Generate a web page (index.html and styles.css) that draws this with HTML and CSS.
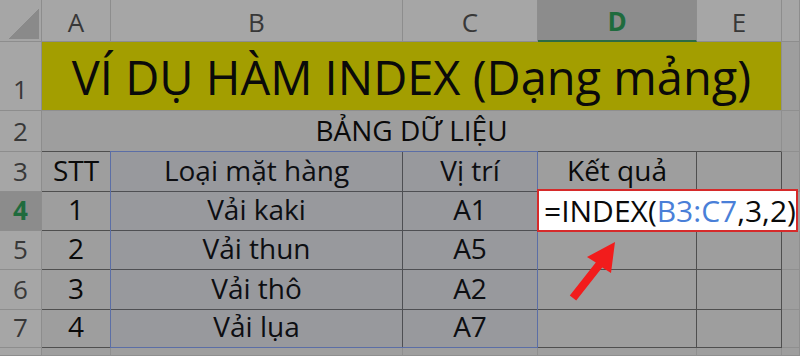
FILE: index.html
```html
<!DOCTYPE html>
<html lang="vi">
<head>
  <meta charset="UTF-8">
  <title>Hàm INDEX - Dạng mảng</title>
  <link rel="stylesheet" href="styles.css">
</head>
<body>
  <div class="sheet">
    <!-- column headers -->
    <div class="corner"><div class="corner-mark"></div></div>
    <div class="col-head">A</div>
    <div class="col-head">B</div>
    <div class="col-head">C</div>
    <div class="col-head active">D</div>
    <div class="col-head">E</div>
    <div class="col-head"></div>

    <!-- row 1 -->
    <div class="row-head row-1">1</div>
    <div class="title">VÍ DỤ HÀM INDEX (Dạng mảng)</div>
    <div class="cell"></div>

    <!-- row 2 -->
    <div class="row-head">2</div>
    <div class="subtitle">BẢNG DỮ LIỆU</div>
    <div class="cell"></div>

    <!-- row 3 -->
    <div class="row-head">3</div>
    <div class="cell tbl">STT</div>
    <div class="cell tbl">Loại mặt hàng</div>
    <div class="cell tbl">Vị trí</div>
    <div class="cell tbl">Kết quả</div>
    <div class="cell tbl"></div>
    <div class="cell"></div>

    <!-- row 4: D4 is being edited -->
    <div class="row-head active">4</div>
    <div class="cell tbl">1</div>
    <div class="cell tbl">Vải kaki</div>
    <div class="cell tbl">A1</div>
    <div class="editor">=INDEX(<span class="ref">B3:C7</span>,3,2)</div>

    <!-- row 5 -->
    <div class="row-head">5</div>
    <div class="cell tbl">2</div>
    <div class="cell tbl">Vải thun</div>
    <div class="cell tbl">A5</div>
    <div class="cell tbl"></div>
    <div class="cell tbl"></div>
    <div class="cell"></div>

    <!-- row 6 -->
    <div class="row-head">6</div>
    <div class="cell tbl">3</div>
    <div class="cell tbl">Vải thô</div>
    <div class="cell tbl">A2</div>
    <div class="cell tbl"></div>
    <div class="cell tbl"></div>
    <div class="cell"></div>

    <!-- row 7 -->
    <div class="row-head">7</div>
    <div class="cell tbl">4</div>
    <div class="cell tbl">Vải lụa</div>
    <div class="cell tbl">A7</div>
    <div class="cell tbl"></div>
    <div class="cell tbl"></div>
    <div class="cell"></div>

    <!-- row 8 (cut off) -->
    <div class="row-head"></div>
    <div class="cell"></div>
    <div class="cell"></div>
    <div class="cell"></div>
    <div class="cell"></div>
    <div class="cell"></div>
    <div class="cell"></div>

    <!-- referenced range B3:C7, drawn over the cells -->
    <div class="range"></div>

    <svg class="arrow" width="800" height="356" viewBox="0 0 800 356">
      <polygon points="615,242 611,273 602.2,267.4 576.2,300.4 569.8,295.6 595.8,262.6 587,257" fill="#f21c1c"/>
    </svg>
  </div>
</body>
</html>
```

FILE: styles.css
```css
body {
  margin: 0;
  background-color: #9e9e9e;
  font-family: "Open Sans", "Noto Sans", sans-serif;
}
.sheet {
  position: relative;
  display: grid;
  grid-template-columns: 42px 69px 292px 135px 159px 85px 18px;
  grid-template-rows: 42px 69px 41px 40px 39px 39px 40px 38px 8px;
  width: 800px;
  height: 356px;
  overflow: hidden;
  background-color: #9e9e9e;
  color: #0a0a0a;
}
.sheet > div {
  box-sizing: border-box;
}
.corner {
  background-color: #a6a6a6;
  border-right: 1px solid #8d8d8d;
  border-bottom: 1px solid #8d8d8d;
  padding: 8px 2px 2px 8px;
}
.corner-mark {
  width: 31px;
  height: 31px;
  background: linear-gradient(to bottom right, transparent 50%, #8a8a8a 50%);
}
.col-head,
.row-head {
  display: flex;
  align-items: flex-end;
  justify-content: center;
  background-color: #a6a6a6;
  border-right: 1px solid #8d8d8d;
  border-bottom: 1px solid #8d8d8d;
  color: #383838;
  font-size: 26px;
  line-height: 1;
}
.col-head {
  padding-bottom: 6px;
}
.row-head {
  padding-bottom: 7px;
}
.row-head.row-1 {
  padding-bottom: 8px;
}
.col-head.active,
.row-head.active {
  background-color: #8c8c8c;
  color: #1f6b3d;
  font-weight: 700;
}
.col-head.active {
  border-bottom: 2px solid #2d6a44;
}
.cell {
  display: flex;
  align-items: flex-end;
  justify-content: center;
  border-right: 1px solid #8f8f8f;
  border-bottom: 1px solid #8f8f8f;
  font-size: 28px;
  line-height: 1;
  padding-bottom: 7px;
  white-space: nowrap;
}
.cell.tbl {
  border-right-color: #4f4f4f;
  border-bottom-color: #4f4f4f;
}
.title {
  grid-column: span 5;
  display: flex;
  align-items: flex-end;
  justify-content: center;
  background-color: #a39e00;
  border-right: 1px solid #8f8f8f;
  border-bottom: 1px solid #8f8f8f;
  font-size: 47px;
  line-height: 1;
  padding-bottom: 9px;
  white-space: nowrap;
}
.subtitle {
  grid-column: span 5;
  display: flex;
  align-items: flex-end;
  justify-content: center;
  border-right: 1px solid #8f8f8f;
  border-bottom: 1px solid #4f4f4f;
  font-size: 28px;
  line-height: 1;
  padding-bottom: 7px;
}
.editor {
  grid-column: span 3;
  display: flex;
  align-items: center;
  margin: -3px 2px -1px -1px;
  padding-left: 5px;
  background-color: #ffffff;
  border: 2px solid #d62a2a;
  font-size: 30px;
  line-height: 1;
  white-space: nowrap;
  z-index: 2;
}
.editor .ref {
  color: #4a7fd8;
}
.range {
  position: absolute;
  grid-column: 3 / 5;
  grid-row: 4 / 9;
  top: -1px;
  left: -1px;
  right: 0;
  bottom: 0;
  border: 1px solid #5b6ea6;
  background-color: rgba(60, 80, 160, 0.06);
  pointer-events: none;
}
.arrow {
  position: absolute;
  top: 0;
  left: 0;
  z-index: 3;
}
```
